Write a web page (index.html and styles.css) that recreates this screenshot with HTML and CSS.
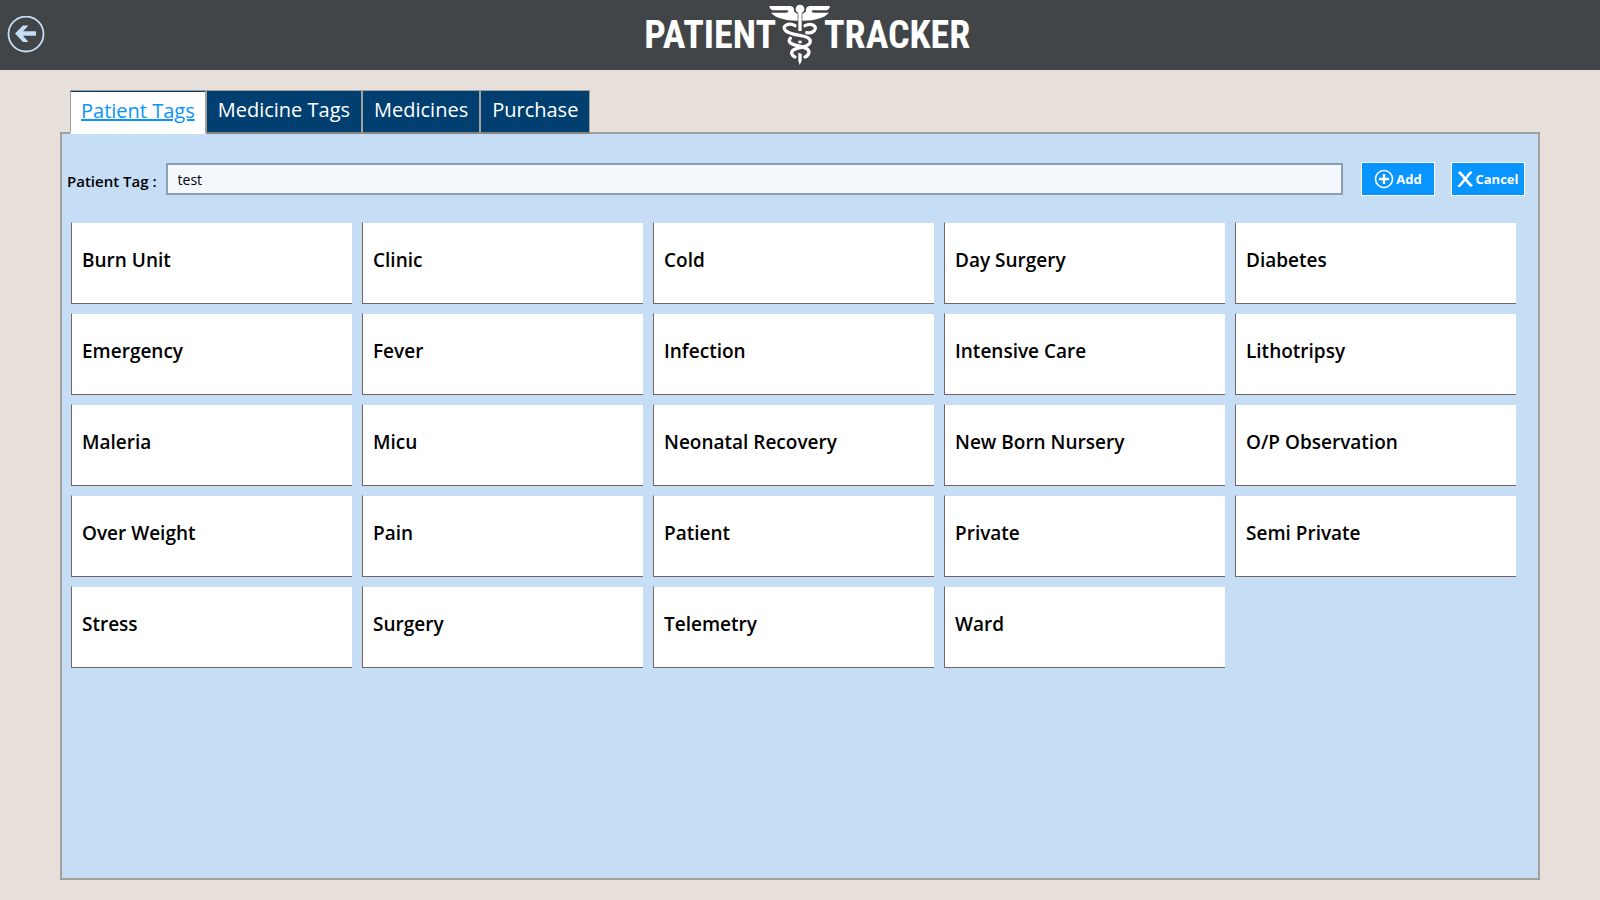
FILE: index.html
```
<!DOCTYPE html>
<html lang="en">
<head>
  <meta charset="UTF-8" />
  <meta name="viewport" content="width=device-width, initial-scale=1.0" />
  <title>Patient Tracker</title>
  <link rel="stylesheet" href="styles.css">
</head>
<body>
  <header class="header">
    <div class="header-left">
      <button type="button" class="back" aria-label="Back">
        <svg viewBox="0 0 38 38" width="38" height="38">
          <circle cx="19" cy="18" r="17.5" fill="none" stroke="#c5ddf5" stroke-width="1.8" />
          <path d="M8 17.5 L16 9.5 H21.5 L16 15.2 H29 V19.8 H16 L21.5 26 H16 Z" fill="#c5ddf5" />
        </svg>
      </button>
      <span class="brand">PATIENT</span>
    </div>
    <svg class="caduceus" viewBox="30 0 186 210" width="62" height="70">
      <g fill="#fff">
        <circle cx="123" cy="27" r="13" />
        <rect x="118" y="35" width="10" height="58" />
        <path d="M31 18 H94 Q105 19 105 31 Q106 39 116 41 V62 Q56 61 36 38 H80 Q90 38 87 31 H42 Q32 28 31 18 Z" />
        <path d="M213 18 H152 Q141 19 141 31 Q140 39 130 41 V62 Q190 61 210 38 H166 Q156 38 159 31 H202 Q212 28 213 18 Z" />
        <rect x="118" y="122" width="10" height="8" />
        <path d="M118 158 L128 162 V182 L122 195 L118 182 Z" />
      </g>
      <g fill="none" stroke="#fff" stroke-width="10" stroke-linecap="round">
        <path d="M108 77 Q96 70 84 74 Q70 80 79 91 Q87 100 122 106 Q154 111 154 124 Q154 137 124 143 Q96 148 98 160 Q100 168 108 171" />
        <path d="M138 77 Q150 70 162 75 Q174 82 166 92 Q158 101 143 98" />
        <path d="M94 115 Q86 125 98 131 Q106 135 124 139 Q151 145 150 157 Q148 167 138 171" />
      </g>
    </svg>
    <span class="brand">TRACKER</span>
  </header>

  <main class="main">
    <nav class="tabs">
      <a href="#patient-tags" class="tab active">Patient Tags</a>
      <a href="#medicine-tags" class="tab">Medicine Tags</a>
      <a href="#medicines" class="tab">Medicines</a>
      <a href="#purchase" class="tab">Purchase</a>
    </nav>

    <section class="panel">
      <form class="tag-form">
        <label for="patientTag">Patient Tag :</label>
        <input type="text" id="patientTag" value="test" />
        <button type="submit" class="btn">
          <svg viewBox="0 0 20 20" width="20" height="20" fill="none" stroke="#fff">
            <circle cx="10" cy="10" r="8.5" stroke-width="1.6" />
            <path d="M10 5 V15 M5 10 H15" stroke-width="2.4" />
          </svg>
          Add
        </button>
        <button type="reset" class="btn">
          <svg viewBox="0 0 16 18" width="16" height="18" fill="#fff">
            <path d="M1 3 L3 1 Q7 5 8.5 7 Q11 3 13.5 1 L15.5 2.5 Q12 6 10 9 Q12.5 12 16 15.5 L13.5 17 Q10 13.5 8.3 11 Q6 14 2.5 17.5 L0.5 16 Q4 12.5 6.5 9 Q4 5.5 1 3 Z" />
          </svg>
          Cancel
        </button>
      </form>

      <ul class="tags">
        <li>Burn Unit</li>
        <li>Clinic</li>
        <li>Cold</li>
        <li>Day Surgery</li>
        <li>Diabetes</li>
        <li>Emergency</li>
        <li>Fever</li>
        <li>Infection</li>
        <li>Intensive Care</li>
        <li>Lithotripsy</li>
        <li>Maleria</li>
        <li>Micu</li>
        <li>Neonatal Recovery</li>
        <li>New Born Nursery</li>
        <li>O/P Observation</li>
        <li>Over Weight</li>
        <li>Pain</li>
        <li>Patient</li>
        <li>Private</li>
        <li>Semi Private</li>
        <li>Stress</li>
        <li>Surgery</li>
        <li>Telemetry</li>
        <li>Ward</li>
      </ul>
    </section>
  </main>
</body>
</html>
```
FILE: styles.css
```
* {
  box-sizing: border-box;
}

body {
  margin: 0;
  min-height: 100vh;
  display: flex;
  flex-direction: column;
  font-family: 'Open Sans', 'Noto Sans', sans-serif;
  background-color: #e6dfda;
  color: #000;
}

.header {
  display: grid;
  grid-template-columns: 1fr auto 1fr;
  align-items: center;
  background-color: #414547;
}

.header-left {
  display: flex;
  justify-content: space-between;
  align-items: center;
  padding-left: 7px;
}

.back {
  display: flex;
  padding: 0;
  border: none;
  background: none;
  cursor: pointer;
}

.brand {
  font-family: 'Roboto Condensed', Roboto, sans-serif;
  font-size: 38px;
  font-weight: bold;
  line-height: 44px;
  color: #fff;
}

.caduceus {
  display: block;
  margin: 0 -7px;
}

.main {
  flex: 1;
  display: flex;
  flex-direction: column;
  padding: 20px 60px;
}

.tabs {
  display: flex;
  position: relative;
  padding-left: 10px;
  margin-bottom: -2px;
}

.tab {
  height: 44px;
  padding: 0 11px;
  border: 1px solid #a39f9b;
  border-bottom: 2px solid #8b8580;
  font-size: 20px;
  line-height: 38px;
  text-decoration: none;
  background-color: #003f70;
  color: #fff;
}

.tab.active {
  padding: 0 10px;
  background-color: #fff;
  border-bottom-color: #fff;
  box-shadow: inset 0 1px #003f70;
  color: #0895ff;
  line-height: 40px;
  text-decoration: underline;
}

.panel {
  flex: 1;
  border: 2px solid #a39f9b;
  padding: 28px 13px 20px 5px;
  background-color: #c5ddf5;
}

.tag-form {
  display: flex;
  align-items: center;
  gap: 16px;
}

.tag-form label {
  margin-right: -7px;
  padding-top: 4px;
  font-size: 15px;
  font-weight: 600;
}

.tag-form input {
  flex: 1;
  height: 32px;
  margin-right: 2px;
  padding: 0 10px;
  border: 2px solid #8b9db2;
  background-color: #f3f8fd;
  font-family: inherit;
  font-size: 14px;
  outline: none;
}

.btn {
  display: flex;
  align-items: center;
  justify-content: center;
  gap: 2px;
  width: 74px;
  height: 34px;
  padding: 0;
  border: 1px solid #fff;
  background-color: #0895ff;
  color: #fff;
  font-family: inherit;
  font-size: 13px;
  font-weight: bold;
  cursor: pointer;
}

.tags {
  display: grid;
  grid-template-columns: repeat(5, 1fr);
  gap: 9px 10px;
  margin: 26px 9px 0 4px;
  padding: 0;
  list-style: none;
}

.tags li {
  height: 82px;
  padding: 22px 10px;
  border-top: 1px solid #c5ddf5;
  border-left: 1px solid #7a6463;
  border-bottom: 1px solid #7a6463;
  background-color: #fff;
  font-size: 19px;
  font-weight: 600;
  line-height: 30px;
}
```
